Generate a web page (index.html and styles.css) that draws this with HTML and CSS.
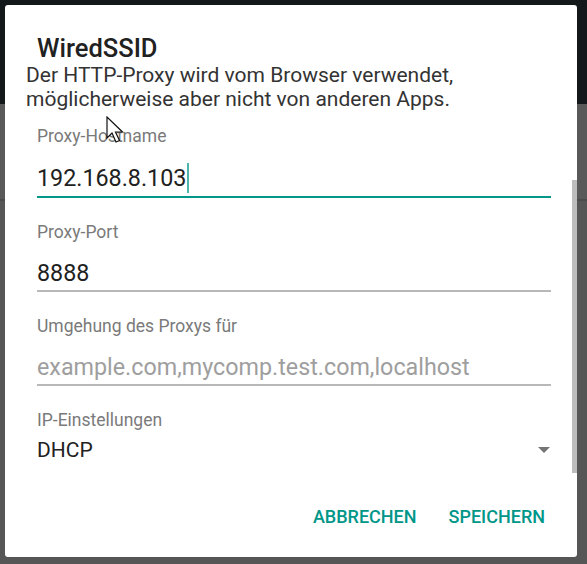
FILE: index.html
```html
<!DOCTYPE html>
<html lang="de">
<head>
    <meta charset="UTF-8">
    <meta name="viewport" content="width=device-width, initial-scale=1.0">
    <title>WiredSSID</title>
    <link rel="stylesheet" href="styles.css">
</head>
<body>

    <div class="dialog">
        <h2 class="title">WiredSSID</h2>
        <p class="message">Der HTTP-Proxy wird vom Browser verwendet,<br>möglicherweise aber nicht von anderen Apps.</p>

        <div class="fields">
            <div class="field">
                <div class="label">Proxy-Hostname</div>
                <div class="input focused">192.168.8.103<span class="caret"></span></div>
            </div>
            <div class="field">
                <div class="label">Proxy-Port</div>
                <div class="input">8888</div>
            </div>
            <div class="field">
                <div class="label">Umgehung des Proxys für</div>
                <div class="input placeholder">example.com,mycomp.test.com,localhost</div>
            </div>
            <div class="field spinner">
                <div class="label">IP-Einstellungen</div>
                <div class="select">
                    <span>DHCP</span>
                    <span class="arrow"></span>
                </div>
            </div>
        </div>

        <div class="buttons">
            <span class="btn">ABBRECHEN</span>
            <span class="btn">SPEICHERN</span>
        </div>

        <div class="scroll-thumb"></div>
    </div>

    <!-- mouse pointer over the dialog -->
    <svg class="pointer" width="20" height="28" viewBox="0 0 20 28">
        <path d="M1 1 L1 22 L6 17 L10 26 L13.5 24.5 L9.5 16 L16.5 16 Z" fill="#fff" stroke="#111" stroke-width="1.2" stroke-linejoin="miter"/>
    </svg>

</body>
</html>
```

FILE: styles.css
```css
body {
    margin: 0;
    height: 564px;
    overflow: hidden;
    font-family: Roboto, "Liberation Sans", sans-serif;
    background: linear-gradient(to bottom,
        #13181a 0, #13181a 104px,
        #595959 104px, #595959 199px,
        #4b4b4b 199px, #4b4b4b 201px,
        #565656 201px);
}
.dialog {
    position: relative;
    box-sizing: border-box;
    width: 572px;
    height: 552px;
    margin: 5px 0 0 5px;
    padding-top: 29px;
    background-color: white;
    border-radius: 3px;
}
.title {
    margin: 0;
    padding-left: 32px;
    font-size: 25.5px;
    line-height: 28px;
    font-weight: 500;
    color: #212121;
}
.message {
    margin: 1px 0 0;
    padding-left: 21px;
    font-size: 21px;
    line-height: 24px;
    color: #333;
}
.fields {
    padding: 15px 26px 0 32px;
}
.field {
    margin-bottom: 24px;
}
.label {
    font-size: 17.5px;
    line-height: 20px;
    color: #7a7a7a;
}
.input {
    margin-top: 17px;
    padding-bottom: 3px;
    font-size: 23.3px;
    line-height: 28px;
    color: #212121;
    border-bottom: 2px solid #b8b8b8;
}
.input.focused {
    border-bottom-color: #009688;
}
.input.placeholder {
    color: #9e9e9e;
}
.caret {
    display: inline-block;
    width: 2px;
    height: 30px;
    margin-left: 1px;
    vertical-align: -7px;
    background-color: #4db6ac;
}
.spinner .select {
    display: flex;
    justify-content: space-between;
    align-items: center;
    margin-top: 8px;
    font-size: 21px;
    line-height: 24px;
    color: #212121;
}
.arrow {
    width: 0;
    height: 0;
    margin-right: 1px;
    border-left: 6px solid transparent;
    border-right: 6px solid transparent;
    border-top: 6px solid #757575;
}
.buttons {
    display: flex;
    justify-content: flex-end;
    gap: 32px;
    padding: 21px 32px 0 0;
}
.btn {
    font-size: 18px;
    line-height: 20px;
    font-weight: 500;
    color: #009688;
}
.scroll-thumb {
    position: absolute;
    right: 0;
    top: 175px;
    width: 5px;
    height: 293px;
    background-color: #bdbdbd;
}
.pointer {
    position: absolute;
    left: 106px;
    top: 116px;
}
```
